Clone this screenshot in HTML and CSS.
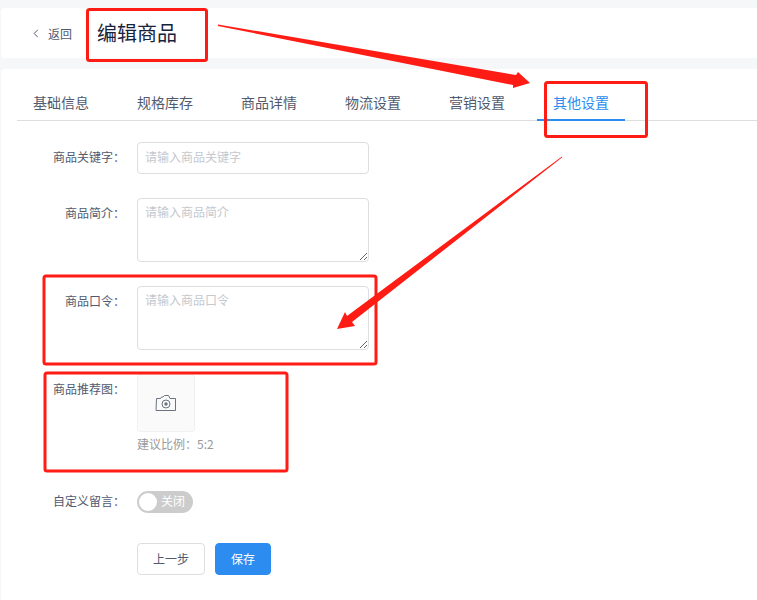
FILE: index.html
```html
<!DOCTYPE html>
<html lang="zh">
<head>
<meta charset="utf-8">
<title>编辑商品</title>
<link rel="stylesheet" href="styles.css">
</head>
<body>
<header class="page-head">
  <a class="back">
    <svg class="back-icon" width="6" height="9" viewBox="0 0 6 9"><path d="M4.800 .8 1.200 4.500l3.600 3.700" fill="none" stroke="#515a6e" stroke-width="1"/></svg>
    <span>返回</span>
  </a>
  <h1 class="title">编辑商品</h1>
</header>
<main class="card">
  <nav class="tabs">
    <a class="tab">基础信息</a>
    <a class="tab">规格库存</a>
    <a class="tab">商品详情</a>
    <a class="tab">物流设置</a>
    <a class="tab">营销设置</a>
    <a class="tab active">其他设置</a>
  </nav>
  <form class="form">
    <div class="row">
      <label class="label">商品关键字：</label>
      <input class="field" placeholder="请输入商品关键字">
    </div>
    <div class="row">
      <label class="label">商品简介：</label>
      <textarea class="field area" placeholder="请输入商品简介"></textarea>
    </div>
    <div class="row">
      <label class="label">商品口令：</label>
      <textarea class="field area" placeholder="请输入商品口令"></textarea>
    </div>
    <div class="row">
      <label class="label">商品推荐图：</label>
      <div class="upload-wrap">
        <div class="upload">
          <svg width="22" height="18" viewBox="0 0 22 18" fill="none" stroke="#6b7280" stroke-width="1">
            <path d="M1.500 4.500h4l1-1.500h1.500l1.500-1.500h4l1.500 3h5.500v12h-19.500z" stroke-linejoin="round"/>
            <circle cx="11" cy="10" r="4"/>
            <circle cx="11" cy="10" r="1.700" fill="#6b7280" stroke="none"/>
          </svg>
        </div>
        <div class="hint">建议比例：5:2</div>
      </div>
    </div>
    <div class="row">
      <label class="label label-switch">自定义留言：</label>
      <div class="switch"><span class="knob"></span><span class="switch-text">关闭</span></div>
    </div>
    <div class="actions">
      <button type="button" class="btn">上一步</button>
      <button type="button" class="btn primary">保存</button>
    </div>
  </form>
</main>
<svg class="marks" width="757" height="600" viewBox="0 0 757 600">
  <g fill="none" stroke="#fe1c14" stroke-width="3">
    <rect x="87.500" y="9.500" width="119" height="51" rx="2"/>
    <rect x="545.500" y="82.500" width="101" height="54" rx="2"/>
    <rect x="44" y="276" width="332" height="88" rx="2"/>
    <rect x="45" y="373" width="242" height="98" rx="2"/>
  </g>
  <g fill="#fe1c14">
    <polygon points="218,24.500 516,75 518,72 530,83 513,88 513,85 218,26"/>
    <polygon points="562,156.500 347,316 345,312 337,329 355,326 352,322 562,157.500"/>
  </g>
</svg>
</body>
</html>
```

FILE: styles.css
```css
* { box-sizing: border-box; }
html, body { margin: 0; height: 100%; overflow: hidden; }
body {
  background: #f5f7f9;
  padding: 8px 0 0 1px;
  font-family: "Noto Sans CJK SC", "Liberation Sans", sans-serif;
  font-size: 12px;
  color: #515a6e;
  position: relative;
}
.page-head {
  height: 50px;
  background: #fff;
  border-radius: 4px 0 0 4px;
  display: flex;
  align-items: center;
  padding-left: 32px;
  margin-bottom: 11px;
}
.back { display: flex; align-items: center; gap: 9px; }
.back-icon { display: block; }
.title {
  margin: -2px 0 0 25px;
  font-size: 20px;
  font-weight: 400;
  color: #17233d;
}
.card {
  background: #fff;
  border-radius: 4px 0 0 0;
  height: 531px;
  padding: 16px 0 0 16px;
}
.tabs {
  display: flex;
  gap: 16px;
  height: 36px;
  border-bottom: 1px solid #dcdee2;
}
.tab {
  width: 88px;
  height: 36px;
  text-align: center;
  font-size: 14px;
  line-height: 34px;
  color: #515a6e;
}
.tab.active {
  color: #2d8cf0;
  border-bottom: 2px solid #2d8cf0;
}
.form { padding-top: 21px; }
.row { display: flex; margin-bottom: 24px; }
.label {
  width: 120px;
  flex: none;
  text-align: right;
  line-height: 30px;
  padding-right: 12px;
}
.label-switch { line-height: 20px; }
.field {
  display: block;
  width: 232px;
  height: 32px;
  border: 1px solid #dcdee2;
  border-radius: 4px;
  padding: 0 7px 3px;
  font: inherit;
  color: #515a6e;
  background: #fff;
  outline: none;
}
.area { height: 64px; padding: 4px 7px; resize: vertical; line-height: 18px; }
.field::placeholder { color: #c5c8ce; opacity: 1; }
.upload-wrap { width: 232px; height: 93px; }
.upload {
  width: 58px;
  height: 58px;
  background: #fafafa;
  border: 1px dotted #e8e8e8;
  border-radius: 4px;
  display: flex;
  align-items: center;
  justify-content: center;
}
.hint { color: #999; line-height: 24px; }
.switch {
  width: 56px;
  height: 22px;
  border-radius: 11px;
  background: #ccc;
  display: flex;
  align-items: center;
  padding-left: 2px;
  gap: 4px;
}
.knob { width: 18px; height: 18px; border-radius: 50%; background: #fff; flex: none; }
.switch-text { color: #fff; line-height: 20px; padding-bottom: 2px; }
.actions { display: flex; gap: 10px; padding: 6px 0 0 120px; }
.btn {
  width: 68px;
  height: 32px;
  border: 1px solid #dcdee2;
  border-radius: 4px;
  background: #fff;
  color: #515a6e;
  font: inherit;
  padding: 0 0 2px;
}
.btn.primary { width: 56px; background: #2d8cf0; border-color: #2d8cf0; color: #fff; }
.marks { position: absolute; left: 0; top: 0; pointer-events: none; }
```
